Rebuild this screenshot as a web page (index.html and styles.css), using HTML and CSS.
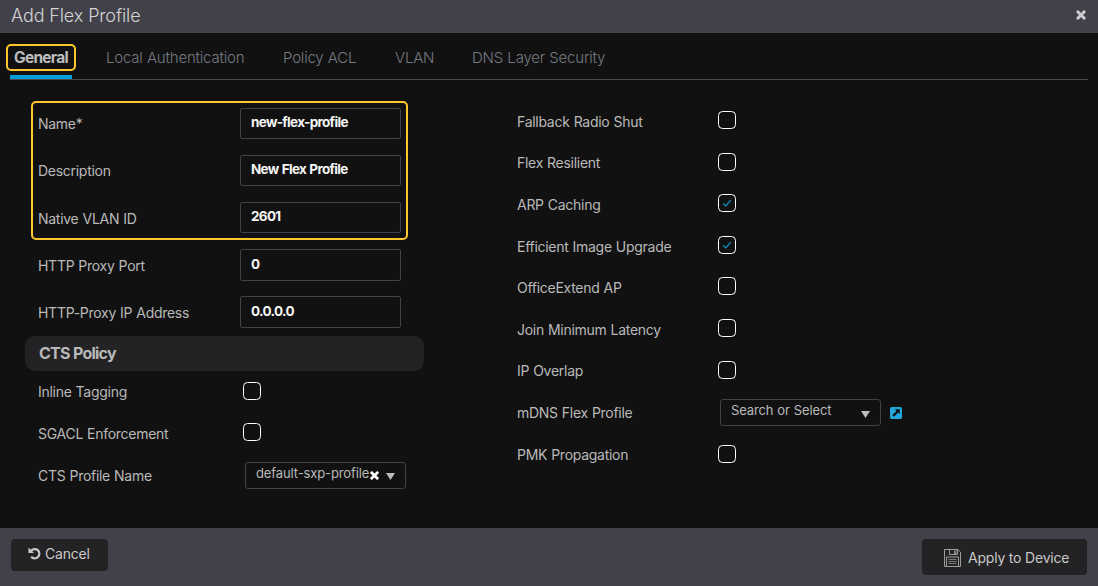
FILE: index.html
```html
<!DOCTYPE html>
<html lang="en">
<head>
<meta charset="utf-8">
<title>Add Flex Profile</title>
<link rel="stylesheet" href="styles.css">
</head>
<body>
<div class="dialog">
  <header class="dialog-header">
    <h1 class="dialog-title">Add Flex Profile</h1>
    <svg class="close" viewBox="0 0 10 10"><path d="M2 2 8 8M8 2 2 8"/></svg>
  </header>
  <nav class="tabs">
    <a class="tab tab-active"><span class="tab-frame">General</span></a>
    <a class="tab tab-auth">Local Authentication</a>
    <a class="tab tab-acl">Policy ACL</a>
    <a class="tab tab-vlan">VLAN</a>
    <a class="tab tab-dns">DNS Layer Security</a>
  </nav>
  <main class="content">
    <section class="left">
      <div class="highlight">
        <div class="field"><span class="label">Name*</span><div class="input">new-flex-profile</div></div>
        <div class="field"><span class="label">Description</span><div class="input">New Flex Profile</div></div>
        <div class="field"><span class="label label-low">Native VLAN ID</span><div class="input">2601</div></div>
      </div>
      <div class="proxy">
        <div class="field"><span class="label label-low">HTTP Proxy Port</span><div class="input input-tall">0</div></div>
        <div class="field"><span class="label label-low">HTTP-Proxy IP Address</span><div class="input input-tall">0.0.0.0</div></div>
      </div>
      <h2 class="section-title"><span>CTS Policy</span></h2>
      <div class="cts">
        <div class="row"><span class="label">Inline Tagging</span><i class="check"></i></div>
        <div class="row"><span class="label">SGACL Enforcement</span><i class="check check-high"></i></div>
        <div class="row"><span class="label">CTS Profile Name</span><div class="select"><span class="select-text">default-sxp-profile</span><svg class="clear" viewBox="0 0 10 10"><path d="M2 2 8 8M8 2 2 8"/></svg><svg class="caret" viewBox="0 0 9 7"><path d="M0 0h9L4.500 7z"/></svg></div></div>
      </div>
    </section>
    <section class="right">
      <div class="row"><span class="label">Fallback Radio Shut</span><i class="check"></i></div>
      <div class="row"><span class="label">Flex Resilient</span><i class="check"></i></div>
      <div class="row"><span class="label">ARP Caching</span><i class="check"><svg class="tick" viewBox="0 0 10 10"><path d="M1.2 5.4 3.7 7.9 8.8 2.2"/></svg></i></div>
      <div class="row"><span class="label">Efficient Image Upgrade</span><i class="check"><svg class="tick" viewBox="0 0 10 10"><path d="M1.2 5.4 3.7 7.9 8.8 2.2"/></svg></i></div>
      <div class="row"><span class="label">OfficeExtend AP</span><i class="check check-high"></i></div>
      <div class="row"><span class="label">Join Minimum Latency</span><i class="check"></i></div>
      <div class="row"><span class="label">IP Overlap</span><i class="check"></i></div>
      <div class="row"><span class="label">mDNS Flex Profile</span><div class="select"><span class="select-text">Search or Select</span><svg class="caret" viewBox="0 0 9 7"><path d="M0 0h9L4.500 7z"/></svg></div><svg class="link" viewBox="0 0 12 12"><rect width="12" height="12" rx="1.8" fill="#22a7dc"/><path d="M4.800 2.200H9.800v5L8.200 5.600 4 9.800 2.300 8.100 6.500 3.900z" fill="#111"/></svg></div>
      <div class="row"><span class="label">PMK Propagation</span><i class="check check-last"></i></div>
    </section>
  </main>
  <footer class="dialog-footer">
    <button class="button cancel"><svg class="undo" viewBox="0 0 14 14"><path d="M3.2 4.2A5 5 0 1 1 3.4 10.4" fill="none" stroke="#c8c8c8" stroke-width="2.4"/><path d="M.5.5v6h6z" fill="#c8c8c8"/></svg><span>Cancel</span></button>
    <button class="button apply"><svg class="save" viewBox="0 0 17 18"><path d="M.5.5h13.3l2.700 2.700v14.300H.5zM5.500 .5v5h8v-5M10.500 1.500v3h1.500v-3M2.500 17.500v-9.500h12v9.500"/><path class="save-lines" d="M4.500 10.500h8M4.500 12.500h8M4.500 14.500h8"/></svg><span>Apply to Device</span></button>
  </footer>
</div>
</body>
</html>
```
FILE: styles.css
```css
* { box-sizing: border-box; }
body { margin: 0; background: #111; font-family: Inter, "Liberation Sans", sans-serif; color: #b9b9b9; }
.dialog { width: 1098px; height: 586px; display: flex; flex-direction: column; overflow: hidden; }
.dialog-header { height: 33px; flex: none; background: #42414a; display: flex; align-items: center; justify-content: space-between; padding: 0 12px 2px 11px; }
.dialog-title { margin: 0; font-size: 18px; line-height: 22px; font-weight: 300; color: #d4d4d4; letter-spacing: -.12px; padding-top: 1px; }
.close { width: 10px; height: 10px; margin-bottom: 2px; }
.close path, .clear path { stroke: #ccc; stroke-width: 3; stroke-linecap: square; }
.tabs { height: 47px; flex: none; margin: 0 10px; border-bottom: 1px solid #4a4a4a; display: flex; }
.tab { height: 46px; font-size: 15px; line-height: 18px; font-weight: 300; color: #767a82; letter-spacing: -.2px; word-spacing: .3px; padding-top: 16px; white-space: nowrap; }
.tab-active { width: 62px; padding-top: 11px; border-bottom: 4px solid #049fd9; margin-right: 34px; }
.tab-frame { display: flex; align-items: center; justify-content: center; width: 70px; height: 27px; margin-left: -4px; border: 2px solid #ffc72c; border-radius: 5px; font-size: 15.5px; font-weight: 700; color: #bcbcbc; letter-spacing: -.75px; }
.tab-auth { width: 177px; }
.tab-acl { width: 112px; }
.tab-vlan { width: 77px; }
.content { height: 448px; flex: none; display: flex; }
.left { width: 399px; margin: 21px 93px 0 25px; }
.highlight { width: 377px; height: 139px; margin-left: 6px; border: 2px solid #ffc72c; border-radius: 5px; padding: 5px; display: flex; flex-direction: column; gap: 16px; }
.field { display: flex; align-items: center; height: 31px; }
.label { font-size: 14px; line-height: 18px; font-weight: 380; letter-spacing: -.28px; word-spacing: .4px; white-space: nowrap; }
.field .label { width: 202px; padding-top: 1px; }
.field .label-low { padding-top: 3px; }
.input { width: 161px; height: 31px; border: 1px solid #42414a; border-radius: 2px; padding: 5px 10px; font-size: 13.5px; line-height: 17px; font-weight: 700; color: #f5f5f5; letter-spacing: -.67px; word-spacing: .6px; white-space: nowrap; }
.proxy { margin: 9px 0 0 13px; display: flex; flex-direction: column; gap: 16px; }
.input-tall { height: 32px; align-self: flex-start; padding-top: 6px; }
.section-title { height: 35px; margin: 9px 0 0; border-radius: 10px; background: #232325; display: flex; align-items: center; padding: 0 0 1px 14px; font-size: 16px; letter-spacing: -.8px; word-spacing: .5px; font-weight: 700; }
.cts { display: grid; grid-auto-rows: 41.7px; padding-left: 13px; }
.cts .label { width: 205px; padding-top: 1px; }
.row { display: flex; align-items: center; }
.check { width: 18px; height: 18px; border: 1.5px solid #fff; border-radius: 4.5px; margin-top: -3px; display: flex; align-items: center; justify-content: center; }
.cts .check { margin-top: -2px; }
.check.check-high { margin-top: -4px; }
.check-last { margin-top: -2px; }
.tick { width: 10px; height: 10px; fill: none; stroke: #049fd9; stroke-width: 1.1; }
.select { width: 161px; height: 27px; border: 1px solid #42414a; border-radius: 3px; padding: 0 10px; display: flex; align-items: center; font-size: 13px; font-weight: 370; letter-spacing: -.12px; word-spacing: .4px; white-space: nowrap; }
.cts .select { margin-left: 2px; }
.select-text { padding-bottom: 5px; }
.clear { width: 9px; height: 9px; margin-left: 1px; }
.clear path { stroke: #fff; }
.caret { margin-left: auto; width: 9px; height: 7px; fill: #bbb; margin-top: 3px; }
.right { display: grid; grid-auto-rows: 41.6px; padding-top: 21px; }
.right .label { width: 201px; }
.right .select { margin-left: 2px; }
.link { width: 12px; height: 12px; margin-left: 9px; }
.dialog-footer { height: 58px; flex: none; background: #42414a; display: flex; align-items: flex-start; justify-content: space-between; padding: 11px; }
.button { border: 0; border-radius: 4px; background: #232325; color: #c8c8c8; font: 370 14px Inter, "Liberation Sans", sans-serif; letter-spacing: -.2px; display: flex; align-items: center; padding: 0; }
.cancel { width: 97px; height: 32px; padding: 0 0 3px 17px; gap: 4px; }
.undo { width: 13px; height: 13px; }
.apply { width: 165px; height: 36px; padding: 1px 0 0 22px; gap: 7px; }
.save { width: 17px; height: 18px; fill: none; stroke: #aaa; stroke-width: .9; }
.save-lines { stroke: #888; }
```
